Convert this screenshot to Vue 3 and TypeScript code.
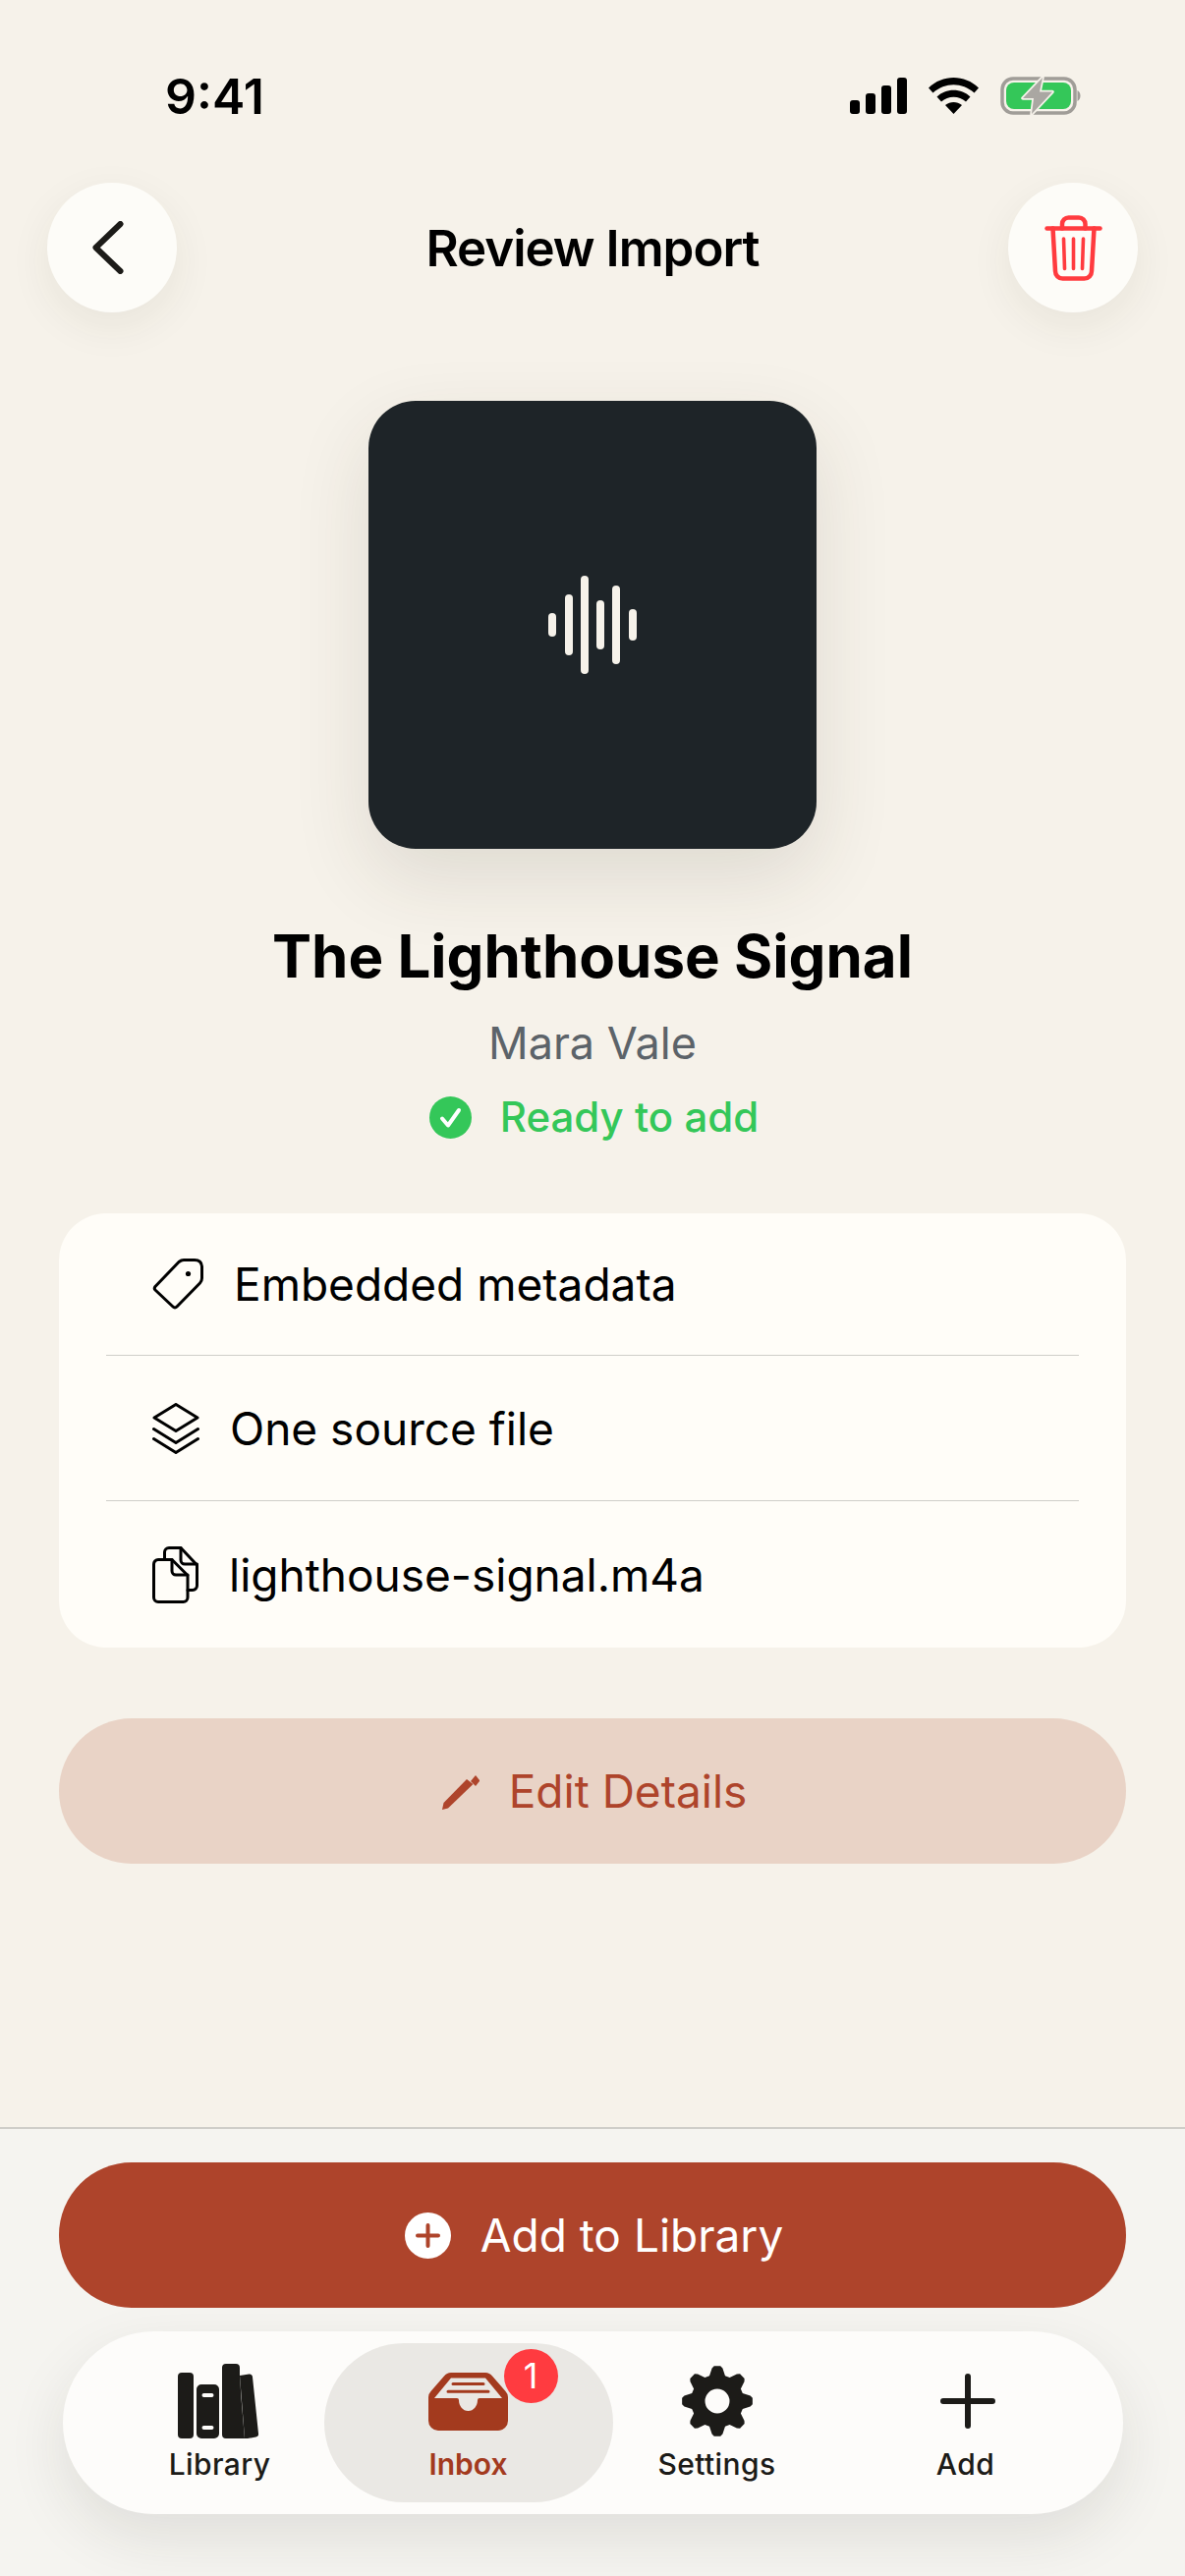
<template>
  <div class="page">
    <div class="status-bar">
      <span class="time">9:41</span>
      <div class="status-icons">
        <svg width="58" height="37" viewBox="0 0 58 37" fill="#000">
          <rect x="0" y="23" width="10" height="14" rx="3" />
          <rect x="16" y="16" width="10" height="21" rx="3" />
          <rect x="32" y="8" width="10" height="29" rx="3" />
          <rect x="48" y="0" width="10" height="37" rx="3" />
        </svg>
        <svg width="51" height="37" viewBox="0 0 51 37" fill="#000">
          <path d="M0 10.5C14-3.5 37-3.5 51 10.5L46.5 15.5C34 4.5 17 4.5 4.5 15.5Z" />
          <path d="M8.5 19.5C17.5 10.5 33.5 10.5 42.5 19.5L38 24.5C31 18 20 18 13 24.5Z" />
          <path d="M17 28C22 24 29 24 34 28L25.5 37Z" />
        </svg>
        <svg width="82" height="39" viewBox="0 0 82 39">
          <rect x="2" y="2" width="74" height="35" rx="11" fill="none" stroke="#a09d98" stroke-width="3.5" />
          <rect x="6" y="6" width="66" height="27" rx="8" fill="#34c759" />
          <path d="M78.5 14C82.5 16 82.5 23 78.5 25Z" fill="#a09d98" />
          <path d="M43 1L23 22H34L32 38L53 15.5H40Z" fill="#aaa7a2" stroke="#f6f2ea" stroke-width="3.5" stroke-linejoin="round" paint-order="stroke" />
        </svg>
      </div>
    </div>

    <header class="nav">
      <button class="round-btn">
        <svg class="back-icon" width="32" height="54" viewBox="0 0 32 54" fill="none" stroke="#1c1b18" stroke-width="6" stroke-linecap="round" stroke-linejoin="round">
          <path d="M28.5 3L3.500 27L28.5 51" />
        </svg>
      </button>
      <h2 class="nav-title">Review Import</h2>
      <button class="round-btn">
        <svg width="59" height="67" viewBox="0 0 59 67" fill="none" stroke="#ff3b3f" stroke-width="4.5" stroke-linecap="round" stroke-linejoin="round">
          <path d="M2.500 13.500H56.500" />
          <path d="M18 13.500V9a6.500 6.500 0 0 1 6.500-6.500H35A6.500 6.500 0 0 1 41.500 9V13.500" />
          <path d="M8.500 13.500L11 57a7.500 7.500 0 0 0 7.500 7.500H40.500A7.500 7.500 0 0 0 48 57L50.500 13.500" />
          <path d="M19.500 24L20.500 54.500M29.500 24V54.500M39.500 24L38.500 54.500" stroke-width="3.600" />
        </svg>
      </button>
    </header>

    <div class="artwork">
      <span v-for="(h, i) in waveBars" :key="i" class="wave-bar" :style="{ height: h + 'px' }"></span>
    </div>

    <h1 class="title">The Lighthouse Signal</h1>
    <p class="author">Mara Vale</p>
    <div class="ready">
      <svg width="43" height="43" viewBox="0 0 43 43">
        <circle cx="21.500" cy="21.500" r="21.500" fill="#34c759" />
        <path d="M13 22.500L19 29.500L30 14" fill="none" stroke="#fff" stroke-width="4" stroke-linecap="round" stroke-linejoin="round" />
      </svg>
      <span>Ready to add</span>
    </div>

    <section class="card">
      <div class="row row-first">
        <svg width="52" height="52" viewBox="0 0 52 52" fill="none" stroke="#000" stroke-width="3" stroke-linejoin="round">
          <path d="M3 28.500L27 3.500Q29.500 1.500 32 1.500H43Q50 1.500 50.500 8V20Q50.500 23 48.500 25L25 49Q23 51 21 49L3 32Q1.500 30.500 3 28.500Z" />
          <circle cx="36.500" cy="15.500" r="2.600" fill="#000" stroke="none" />
        </svg>
        <span>Embedded metadata</span>
      </div>
      <div class="row row-second">
        <svg width="48" height="52" viewBox="0 0 48 52" fill="none" stroke="#000" stroke-width="3" stroke-linecap="round" stroke-linejoin="round">
          <path d="M24 1.500L46 15L24 28.500L2 15Z" />
          <path d="M1.500 26.500L24 40.500L46.500 26.500" />
          <path d="M1.500 36.500L24 50.500L46.500 36.500" />
        </svg>
        <span>One source file</span>
      </div>
      <div class="row row-last">
        <svg width="47" height="58" viewBox="0 0 47 58" fill="none" stroke="#000" stroke-width="3" stroke-linecap="round" stroke-linejoin="round">
          <path d="M6 13.500H20L36 29.500V52a4.500 4.500 0 0 1-4.500 4.500H6A4.500 4.500 0 0 1 1.500 52V18A4.500 4.500 0 0 1 6 13.500Z" />
          <path d="M20 13.500V25a4 4 0 0 0 4 4H36" />
          <path d="M12.500 13.500V6A4.500 4.500 0 0 1 17 1.500H29L45.500 19V40a4.500 4.500 0 0 1-4.500 4.500H36" />
          <path d="M29 1.500V14a4 4 0 0 0 4 4H45.500" />
        </svg>
        <span>lighthouse-signal.m4a</span>
      </div>
    </section>

    <button class="edit-btn">
      <svg width="38" height="37" viewBox="0 0 38 37" fill="#ae442b">
        <path d="M0 37L1.500 30L25 6L31.500 11L6 35.500Z" />
        <path d="M34 2L38.500 7.500L34 13L29 8Z" />
      </svg>
      <span>Edit Details</span>
    </button>

    <div class="spacer"></div>

    <footer class="bottom">
      <button class="add-btn">
        <svg width="47" height="47" viewBox="0 0 47 47">
          <circle cx="23.500" cy="23.500" r="23.500" fill="#fff" />
          <path d="M23.500 13V34M13 23.500H34" stroke="#ae442b" stroke-width="4" stroke-linecap="round" />
        </svg>
        <span>Add to Library</span>
      </button>

      <nav class="tab-bar">
        <div class="tab">
          <div class="tab-icon shift-left">
            <svg width="82" height="76" viewBox="0 0 82 76" fill="#1c1b18">
              <rect x="0" y="9" width="16" height="67" rx="4" />
              <path fill-rule="evenodd" d="M24 21H37a5 5 0 0 1 5 5V71a5 5 0 0 1-5 5H24a5 5 0 0 1-5-5V26a5 5 0 0 1 5-5ZM26.500 30a2 2 0 0 0 0 4H34.500a2 2 0 0 0 0-4ZM26.500 63a2 2 0 0 0 0 4H34.500a2 2 0 0 0 0-4Z" />
              <path d="M49 0H59a4 4 0 0 1 4 4V11L64.500 35L68 76H49a4 4 0 0 1-4-4V4a4 4 0 0 1 4-4Z" />
              <path d="M63 12L72.500 10.500a3 3 0 0 1 3.500 3L82 71a3 3 0 0 1-2.500 3.500L71 76H68Z" />
            </svg>
          </div>
          <span>Library</span>
        </div>
        <div class="tab active">
          <div class="tab-icon">
            <svg width="81" height="59" viewBox="0 0 81 59">
              <path fill="#a33a1e" fill-rule="evenodd" d="M23 0H58a9 9 0 0 1 7 3.500L78.500 19a9 9 0 0 1 2.500 6V49a10 10 0 0 1-10 10H10A10 10 0 0 1 0 49V25a9 9 0 0 1 2.500-6L16 3.500A9 9 0 0 1 23 0ZM23 5.500L6 26H29Q31 26 31 28C31 34 35 39 40.500 39S50 34 50 28Q50 26 52 26H75L58 5.500Z" />
              <path d="M25 11.500H56M20 19.300H61" stroke="#a33a1e" stroke-width="3" stroke-linecap="round" />
            </svg>
          </div>
          <span>Inbox</span>
          <span class="badge">1</span>
        </div>
        <div class="tab">
          <div class="tab-icon">
            <svg width="72" height="72" viewBox="0 0 72 72">
              <path :d="gearPath" fill="#1c1b18" fill-rule="evenodd" />
            </svg>
          </div>
          <span>Settings</span>
        </div>
        <div class="tab">
          <div class="tab-icon shift-right">
            <svg width="56" height="56" viewBox="0 0 56 56">
              <path d="M28 3V53M3 28H53" stroke="#1c1b18" stroke-width="6" stroke-linecap="round" />
            </svg>
          </div>
          <span>Add</span>
        </div>
      </nav>
    </footer>
  </div>
</template>

<script setup lang="ts">
const waveBars = [24, 62, 100, 50, 80, 32];

// 8 rounded teeth around a hole, same shape as the settings glyph
const buildGear = (): string => {
  const cx = 36;
  const cy = 36;
  const outer = 36;
  const root = 27;
  const pts: string[] = [];
  for (let i = 0; i < 8; i++) {
    const a = (i * Math.PI) / 4 - Math.PI / 2;
    const steps: [number, number][] = [
      [root, a - 0.3],
      [outer - 2, a - 0.16],
      [outer, a - 0.09],
      [outer, a + 0.09],
      [outer - 2, a + 0.16],
      [root, a + 0.3],
    ];
    for (const [r, t] of steps) {
      pts.push(`${(cx + r * Math.cos(t)).toFixed(2)} ${(cy + r * Math.sin(t)).toFixed(2)}`);
    }
  }
  const hole = 12.5;
  return `M${pts.join('L')}Z M${cx - hole} ${cy}a${hole} ${hole} 0 1 0 ${hole * 2} 0a${hole} ${hole} 0 1 0 -${hole * 2} 0Z`;
};

const gearPath = buildGear();
</script>

<style>
html, body {
  margin: 0;
  background: #f6f2ea;
}
</style>

<style scoped>
.page {
  width: 1206px;
  height: 2622px;
  display: flex;
  flex-direction: column;
  align-items: center;
  background: #f6f2ea;
  font-family: Inter, "Liberation Sans", sans-serif;
  color: #000;
  overflow: hidden;
}

.status-bar {
  width: 100%;
  box-sizing: border-box;
  height: 186px;
  padding: 78px 106px 0 168px;
  display: flex;
  justify-content: space-between;
  align-items: flex-start;
}

.time {
  font-size: 50px;
  font-weight: 600;
  line-height: 40px;
}

.status-icons {
  display: flex;
  align-items: center;
  gap: 22px;
}

.nav {
  width: 100%;
  box-sizing: border-box;
  padding: 0 48px;
  display: flex;
  justify-content: space-between;
  align-items: center;
}

.round-btn {
  width: 132px;
  height: 132px;
  border: none;
  border-radius: 50%;
  background: #fdfcf8;
  display: flex;
  align-items: center;
  justify-content: center;
  padding: 0;
  box-shadow: 0 14px 44px rgba(60, 50, 30, 0.07);
}

.back-icon {
  margin-right: 9px;
}

.nav-title {
  margin: 2px 0 0;
  font-size: 51px;
  font-weight: 600;
  line-height: 64px;
  letter-spacing: -1px;
}

.artwork {
  width: 456px;
  height: 456px;
  margin-top: 90px;
  border-radius: 48px;
  background: #1e2428;
  display: flex;
  align-items: center;
  justify-content: center;
  gap: 8.3px;
  box-shadow: 0 30px 80px rgba(60, 50, 30, 0.12);
}

.wave-bar {
  width: 8px;
  border-radius: 4px;
  background: #f6f2ea;
}

.title {
  margin: 73px 0 0;
  font-size: 60px;
  font-weight: 700;
  line-height: 72px;
}

.author {
  margin: 26px 0 0;
  font-size: 45px;
  line-height: 54px;
  color: #5c6369;
}

.ready {
  margin: 23px 0 0 3px;
  display: flex;
  align-items: center;
  gap: 29px;
  font-size: 42px;
  font-weight: 500;
  line-height: 50px;
  color: #34c759;
}

.card {
  width: 1086px;
  box-sizing: border-box;
  margin-top: 73px;
  padding: 0 48px;
  border-radius: 48px;
  background: #fffdf8;
}

.row {
  display: flex;
  align-items: center;
  gap: 31px;
  padding-left: 47px;
  font-size: 46px;
  border-bottom: 1px solid #cfcec9;
}

.row-first {
  height: 144px;
}

.row-second {
  height: 147px;
}

.row-last {
  height: 149px;
  border-bottom: none;
}

.edit-btn,
.add-btn {
  width: 1086px;
  height: 148px;
  border: none;
  border-radius: 74px;
  display: flex;
  align-items: center;
  justify-content: center;
  gap: 30px;
  font-family: inherit;
  font-size: 46px;
}

.edit-btn {
  margin-top: 72px;
  padding: 0 0 0 4px;
  background: #e9d3c6;
  color: #ae442b;
}

.spacer {
  flex: 1;
}

.bottom {
  width: 100%;
  box-sizing: border-box;
  border-top: 2px solid #cfcec9;
  padding: 34px 0 63px;
  background: #f5f4f0;
  display: flex;
  flex-direction: column;
  align-items: center;
}

.add-btn {
  padding: 0 0 0 3px;
  background: #ae442b;
  color: #fff;
}

.tab-bar {
  width: 1079px;
  height: 186px;
  box-sizing: border-box;
  margin-top: 24px;
  padding: 0 33.5px;
  border-radius: 93px;
  background: #fdfcfa;
  display: grid;
  grid-template-columns: repeat(4, 253px);
  box-shadow: 0 24px 60px rgba(40, 35, 25, 0.1);
  isolation: isolate;
}

.tab {
  position: relative;
  display: flex;
  flex-direction: column;
  align-items: center;
  padding-top: 33px;
  font-size: 30px;
  font-weight: 500;
  line-height: 36px;
  letter-spacing: 0.4px;
  color: #1c1b18;
}

.tab.active {
  color: #a33a1e;
  font-weight: 600;
  letter-spacing: 0;
}

.tab.active::before {
  content: "";
  position: absolute;
  top: 12px;
  left: -20.5px;
  width: 294px;
  height: 162px;
  border-radius: 81px;
  background: #eae8e4;
  z-index: -1;
}

.tab-icon {
  height: 76px;
  margin-bottom: 8px;
  display: flex;
  align-items: center;
  justify-content: center;
}

.shift-left {
  margin-right: 4px;
}

.shift-right {
  margin-left: 5px;
}

.badge {
  position: absolute;
  top: 18px;
  left: 50%;
  margin-left: 36px;
  width: 55px;
  height: 55px;
  border-radius: 50%;
  background: #ff3b40;
  color: #fff;
  font-size: 36px;
  font-weight: 400;
  line-height: 55px;
  text-align: center;
}
</style>
